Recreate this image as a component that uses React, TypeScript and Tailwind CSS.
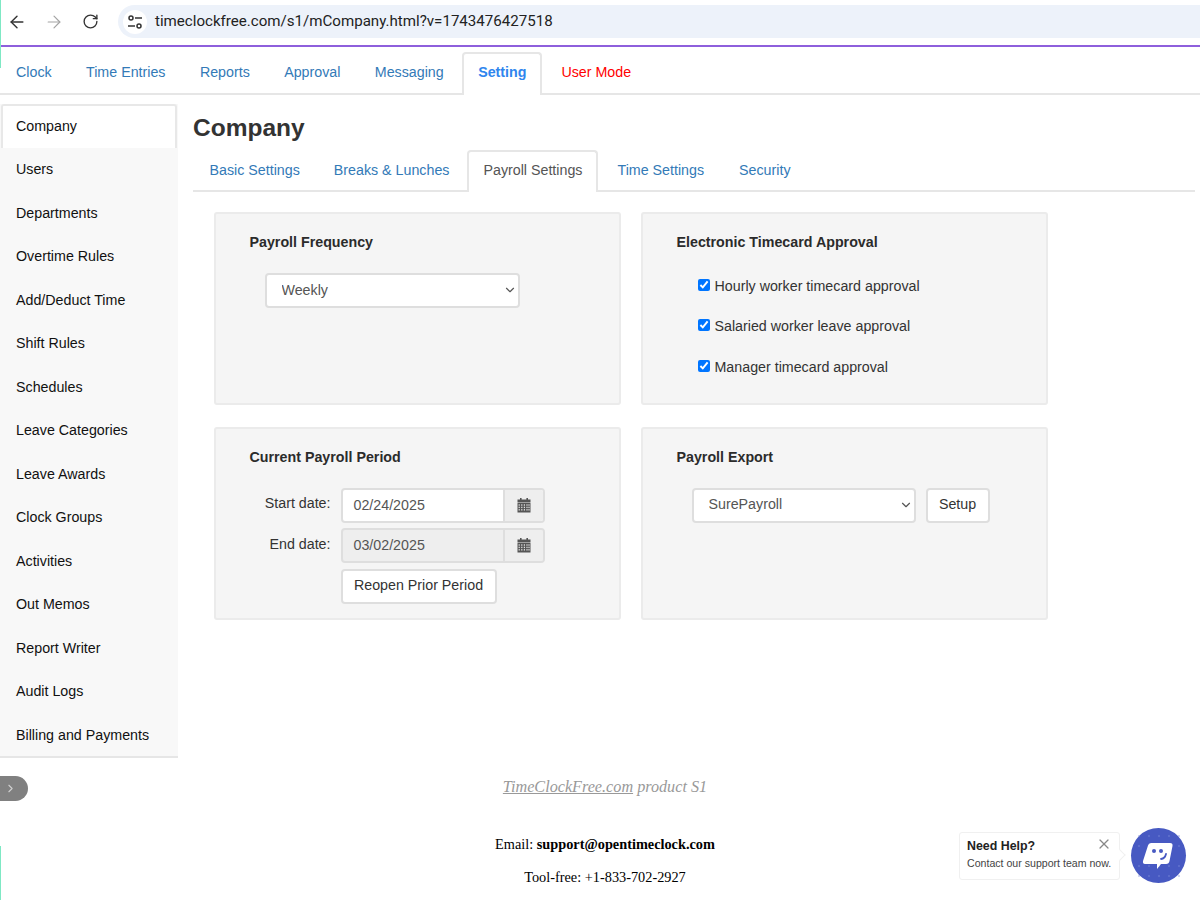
import React from "react";
import { ArrowLeft, ArrowRight, RotateCw, ChevronRight, ChevronDown, X } from "lucide-react";

const SANS = "font-['Liberation_Sans',Arial,sans-serif]";

function Calendar() {
  return (
    <svg width="14" height="15" viewBox="0 0 14 15" fill="none">
      <rect x="3" y="0" width="1.6" height="3" fill="#555" />
      <rect x="9.4" y="0" width="1.6" height="3" fill="#555" />
      <rect x="0.5" y="1.5" width="13" height="3" fill="#555" />
      <rect x="0.5" y="5" width="13" height="9.5" fill="#555" />
      {[6.3, 8.7, 11.1].map((y) =>
        [1.6, 4.2, 6.8, 9.4, 11.4].map((x) => (
          <rect key={`${x}-${y}`} x={x} y={y} width="1.2" height="1.4" fill="#e4e4e4" />
        )),
      )}
    </svg>
  );
}

function TuneIcon() {
  return (
    <svg width="16" height="16" viewBox="0 0 16 16" fill="none" stroke="#333" strokeWidth="1.5">
      <circle cx="4" cy="4" r="2" />
      <path d="M8 4h7" />
      <circle cx="12" cy="12" r="2" />
      <path d="M1 12h7" />
    </svg>
  );
}

function ChatLogo() {
  return (
    <div className="relative flex h-[55px] w-[55px] items-center justify-center rounded-full bg-[#4759c2]">
      <svg width="55" height="55" viewBox="0 0 55 55">
        {[8, 18, 28, 38, 48].map((x) =>
          [8, 18, 38, 48].map((y) => (
            <circle key={`${x}-${y}`} cx={x} cy={y} r="0.7" fill="#7f8dd8" />
          )),
        )}
        <path
          d="M17 17.5 Q17.5 15 20 15 H39 Q42 15 41.5 18 L38.5 33 Q38 36 35 36 H30 L26 41 L26 36 H14 Q11.5 36 12 33 Z"
          fill="#fff"
        />
        <circle cx="23" cy="23" r="2" fill="#4759c2" />
        <circle cx="30" cy="23" r="2" fill="#4759c2" />
        <path d="M30 31 Q34 30.5 35 26" fill="none" stroke="#4759c2" strokeWidth="1.8" strokeLinecap="round" />
      </svg>
    </div>
  );
}

const topTabs = ["Clock", "Time Entries", "Reports", "Approval", "Messaging"];
const sideItems = [
  "Users",
  "Departments",
  "Overtime Rules",
  "Add/Deduct Time",
  "Shift Rules",
  "Schedules",
  "Leave Categories",
  "Leave Awards",
  "Clock Groups",
  "Activities",
  "Out Memos",
  "Report Writer",
  "Audit Logs",
  "Billing and Payments",
];

function Panel({ title, children }: { title: string; children: React.ReactNode }) {
  return (
    <section className="h-[193px] w-[407px] rounded-[3px] border-2 border-[#ebebeb] bg-[#f5f5f5] pl-[33.5px] pt-[18px]">
      <h3 className="text-[14.25px] font-bold leading-[20px] text-[#2b2b2b]">{title}</h3>
      {children}
    </section>
  );
}

function Check({ label }: { label: string }) {
  return (
    <label className="flex h-[40.7px] items-start text-[14.25px] leading-[20px] text-[#333]">
      <input type="checkbox" defaultChecked className="ml-[21px] mr-[5px] mt-[3px] h-3 w-3 accent-[#0075ff]" />
      <span>{label}</span>
    </label>
  );
}

function DateRow({ label, value, disabled }: { label: string; value: string; disabled?: boolean }) {
  return (
    <div className="flex h-[35px] items-start">
      <span className="w-[91px] pr-[10px] pt-[5.5px] text-right text-[14.25px] leading-[20px] text-[#333]">{label}</span>
      <div className={`flex h-[35px] w-[204px] overflow-hidden rounded-[4px] border-2 border-[#dedede] ${disabled ? "bg-[#eeeeee]" : "bg-white"}`}>
        <div className="flex-1 pl-[11px] text-[14.25px] leading-[31px] text-[#555]">{value}</div>
        <div className="flex w-[40px] items-center justify-center border-l-2 border-[#dedede] bg-[#eeeeee]">
          <Calendar />
        </div>
      </div>
    </div>
  );
}

function Select({ value, width }: { value: string; width: string }) {
  return (
    <div className={`relative ${width}`}>
      <select className="h-[35px] w-full appearance-none rounded-[4px] border-2 border-[#dedede] bg-white pl-[15px] text-[14.25px] text-[#555]">
        <option>{value}</option>
      </select>
      <ChevronDown size={14} strokeWidth={2} className="pointer-events-none absolute right-[3px] top-[10px] text-[#555]" />
    </div>
  );
}

export default function App() {
  return (
    <div className={`relative h-[900px] w-full overflow-hidden bg-white ${SANS}`}>
      {/* browser toolbar */}
      <div className="flex h-[45px] items-center bg-white pb-[2px] pl-[7px]">
        <ArrowLeft size={20} strokeWidth={1.7} className="text-[#333]" />
        <ArrowRight size={20} strokeWidth={1.4} className="ml-[17px] text-[#a3a3a3]" />
        <RotateCw size={17} strokeWidth={1.9} className="ml-[18px] text-[#333]" />
        <div className="ml-[19px] flex h-[33px] flex-1 items-center rounded-l-full bg-[#edf2fa] pl-[5px]">
          <div className="flex h-[24px] w-[24px] items-center justify-center rounded-full bg-white">
            <TuneIcon />
          </div>
          <span className="ml-[8px] font-['Roboto',sans-serif] text-[15.1px] text-[#222]">
            timeclockfree.com/s1/mCompany.html?v=1743476427518
          </span>
        </div>
      </div>
      <div className="h-[2px] bg-[#8e5fdc]" />

      {/* top tabs */}
      <nav className="flex h-[48px] items-end border-b-2 border-[#e6e6e6] pl-[1px]">
        {topTabs.map((t) => (
          <a key={t} className="mr-[4.4px] px-[15px] pb-[11px] text-[14.25px] leading-[20px] text-[#337ab7]">
            {t}
          </a>
        ))}
        <a className="-mb-[2px] ml-[-1px] h-[43px] rounded-t-[4px] border-2 border-b-0 border-[#e6e6e6] bg-white px-[14px] pt-[8px] text-[14.25px] font-bold leading-[20px] text-[#2f86ee]">
          Setting
        </a>
        <a className="ml-[4px] px-[15px] pb-[11px] text-[14.25px] leading-[20px] text-[#f00]">User Mode</a>
      </nav>

      <div className="flex">
        {/* sidebar */}
        <div className="w-[178px] shrink-0 pt-[9px]">
          <aside className="h-[654px] w-[178px] overflow-hidden border-b-2 border-[#e6e6e6] bg-[#f8f8f8]">
            <div className="ml-[1px] h-[44px] w-[176px] rounded-t-[3px] border-2 border-b-0 border-[#e8e8e8] bg-white pl-[13px] pt-[10px] text-[14.25px] leading-[20px] text-[#111]">
              Company
            </div>
            {sideItems.map((s) => (
              <div key={s} className="h-[43.5px] pl-[16px] pt-[11px] text-[14.25px] leading-[20px] text-[#111]">
                {s}
              </div>
            ))}
          </aside>
          <div className="mt-[18px] flex h-[25px] w-[28px] items-center justify-center rounded-r-full bg-[#808080]">
            <ChevronRight size={13} className="mr-[8px] text-[#cfcfcf]" />
          </div>
        </div>

        {/* main */}
        <main className="min-w-0 flex-1">
          <div className="ml-[15px] mr-[5px]">
            <h1 className="pt-[14.5px] text-[24.5px] font-bold leading-[36px] text-[#333]">Company</h1>
            <div className="mt-[4.5px] flex h-[42px] items-end border-b-2 border-[#e6e6e6] pl-[0.5px]">
              <a className="px-[16px] pb-[10px] text-[14.25px] leading-[20px] text-[#337ab7]">Basic Settings</a>
              <a className="ml-[2px] px-[16px] pb-[10px] text-[14.25px] leading-[20px] text-[#337ab7]">Breaks &amp; Lunches</a>
              <a className="-mb-[2px] ml-[2px] h-[42px] rounded-t-[4px] border-2 border-b-0 border-[#e6e6e6] bg-white px-[14px] pt-[8px] text-[14.25px] leading-[20px] text-[#555]">
                Payroll Settings
              </a>
              <a className="ml-[4px] px-[15px] pb-[10px] text-[14.25px] leading-[20px] text-[#337ab7]">Time Settings</a>
              <a className="ml-[5px] px-[15px] pb-[10px] text-[14.25px] leading-[20px] text-[#337ab7]">Security</a>
            </div>
          </div>

          <div className="ml-[36px] mt-[20px] grid w-[834px] grid-cols-[407px_407px] gap-x-[20px] gap-y-[21.5px]">
            <Panel title="Payroll Frequency">
              <div className="ml-[15px] mt-[21px]">
                <Select value="Weekly" width="w-[255px]" />
              </div>
            </Panel>
            <Panel title="Electronic Timecard Approval">
              <div className="mt-[23.5px]">
                <Check label="Hourly worker timecard approval" />
                <Check label="Salaried worker leave approval" />
                <Check label="Manager timecard approval" />
              </div>
            </Panel>
            <Panel title="Current Payroll Period">
              <div className="mt-[21px] flex flex-col gap-[5.5px]">
                <DateRow label="Start date:" value="02/24/2025" />
                <DateRow label="End date:" value="03/02/2025" disabled />
                <button className="ml-[91px] h-[35px] w-[156px] rounded-[4px] border-2 border-[#dedede] bg-white text-[14.25px] text-[#333]">
                  Reopen Prior Period
                </button>
              </div>
            </Panel>
            <Panel title="Payroll Export">
              <div className="ml-[15px] mt-[21px] flex gap-[10px]">
                <Select value="SurePayroll" width="w-[224px]" />
                <button className="h-[35px] w-[64px] rounded-[4px] border-2 border-[#dedede] bg-white text-[14.25px] text-[#333]">
                  Setup
                </button>
              </div>
            </Panel>
          </div>

          <footer className="mt-[156.5px] w-[854px] text-center font-['Liberation_Serif',serif] text-[14.3px] text-black">
            <p className="text-[16.2px] italic leading-[22px] text-[#999]">
              <span className="underline">TimeClockFree.com</span> product S1
            </p>
            <p className="mt-[35px] leading-[22px]">
              Email: <b>support@opentimeclock.com</b>
            </p>
            <p className="mt-[11px] leading-[22px]">Tool-free: +1-833-702-2927</p>
          </footer>
        </main>
      </div>

      {/* overlays */}
      <div className="absolute left-0 top-0 h-[68px] w-[1px] bg-[#7fe8c4]" />
      <div className="absolute bottom-0 left-0 h-[54px] w-[1px] bg-[#7fe8c4]" />
      <div className="absolute left-[959px] top-[832px] h-[48px] w-[161px] rounded-[3px] border border-[#f0f0f0] bg-white pl-[7px] pt-[5px]">
        <div className="text-[12.4px] font-bold leading-[16px] text-[#222]">Need Help?</div>
        <div className="mt-[1px] text-[10.6px] leading-[16px] text-[#444]">Contact our support team now.</div>
        <X size={16} strokeWidth={1.8} className="absolute right-[7px] top-[3px] text-[#888]" />
        <div className="absolute right-[-5px] top-[18px] h-2 w-2 rotate-45 border-r border-t border-[#f0f0f0] bg-white" />
      </div>
      <div className="absolute left-[1131px] top-[828px]">
        <ChatLogo />
      </div>
    </div>
  );
}
